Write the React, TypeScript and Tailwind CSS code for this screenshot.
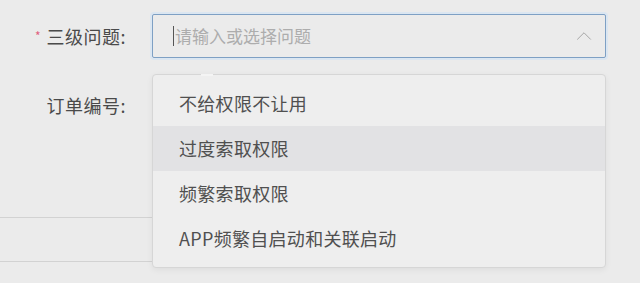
import { ChevronUp } from "lucide-react";

const options = ["不给权限不让用", "过度索取权限", "频繁索取权限", "APP频繁自启动和关联启动"];

export default function App() {
  return (
    <div
      className="h-[283px] w-[640px] overflow-hidden bg-[#ebebeb] text-[#4a4a4a]"
      style={{ fontFamily: '"Noto Sans CJK SC", "Noto Sans", sans-serif' }}
    >
      <div className="relative">
        {/* row 1 */}
        <div className="flex items-center pt-[14px]">
          <div className="flex w-[152px] items-center justify-end pr-[26px] text-[18px]">
            <span className="mr-[6px] text-[12px] text-[#e06080]">*</span>
            <span className="tracking-[0.5px]">三级问题:</span>
          </div>
          <div className="flex h-[44px] w-[454px] items-center rounded-[2px] border border-[#7ea0c4] bg-[#ebebeb] pl-[20px] pr-[8px] shadow-[0_0_0_2px_#dbe6f1]">
            <span className="mr-[1px] h-[20px] w-px bg-[#555]" />
            <span className="flex-1 text-[17px] text-[#adadad]">请输入或选择问题</span>
            <ChevronUp size={26} strokeWidth={0.8} className="text-[#9a9a9a]" />
          </div>
        </div>

        {/* row 2 */}
        <div className="flex items-center pt-[34px]">
          <div className="w-[152px] pr-[26px] text-right text-[18px] tracking-[0.5px]">订单编号:</div>
        </div>

        {/* lines on the left */}
        <div className="mt-[98px] h-px w-[152px] bg-[#d2d2d2]" />
        <div className="mt-[43px] h-px w-[152px] bg-[#d2d2d2]" />

        {/* dropdown */}
        <div className="absolute left-[152px] top-[74px] w-[454px] rounded-[4px] border border-[#d6d6d6] bg-[#eeeeee] py-[6px] shadow-[0_2px_6px_rgba(0,0,0,0.06)]">
          <div className="absolute -top-px left-[48px] h-[2px] w-[12px] bg-[#f4f4f4]" />
          {options.map((o, i) => (
            <div
              key={o}
              className={`flex h-[45px] items-center pl-[26px] text-[18px] tracking-[0.3px] text-[#505050] ${
                i === 1 ? "bg-[#e2e2e4]" : ""
              }`}
            >
              {o}
            </div>
          ))}
        </div>
      </div>
    </div>
  );
}
